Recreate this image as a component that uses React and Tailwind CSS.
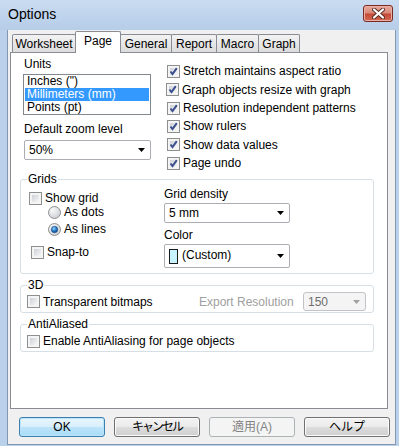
import React from 'react';

const Arrow = ({ disabled }) => (
  <svg width="7" height="4" viewBox="0 0 7 4" className="shrink-0">
    <polygon points="0,0 7,0 3.5,4" fill={disabled ? '#a0a0a0' : '#000'} />
  </svg>
);

const Check = ({ checked }) => (
  <span className="relative block w-[13px] h-[13px] shrink-0 border border-[#8e8f8f] bg-[#f4f4f4] p-[2px]">
    <span className="block w-full h-full bg-linear-to-br from-[#cdd1d7] to-[#f7f7f7]" />
    {checked && (
      <svg className="absolute left-0 top-0" width="11" height="11" viewBox="0 0 11 11">
        <path d="M2.5 5.5 L4.5 8 L8.8 2.2" stroke="#3b4f8c" strokeWidth="2" fill="none" />
      </svg>
    )}
  </span>
);

const Radio = ({ checked }) => (
  <svg width="13" height="13" viewBox="0 0 13 13" className="shrink-0">
    <defs>
      <radialGradient id="rg" cx="0.35" cy="0.3" r="0.8">
        <stop offset="0" stopColor="#f8f8f8" />
        <stop offset="1" stopColor="#c9cdd3" />
      </radialGradient>
      <radialGradient id="rb" cx="0.4" cy="0.35" r="0.7">
        <stop offset="0" stopColor="#9ad8ff" />
        <stop offset="0.5" stopColor="#2a82d2" />
        <stop offset="1" stopColor="#0d3f7a" />
      </radialGradient>
    </defs>
    <circle cx="6.5" cy="6.5" r="6" fill="url(#rg)" stroke="#8e8f8f" />
    {checked && <circle cx="6.5" cy="6.5" r="3.2" fill="url(#rb)" stroke="#1d4a7c" strokeWidth="0.6" />}
  </svg>
);

const CheckRow = ({ label, checked, className = '' }) => (
  <div className={`flex items-center gap-[3px] ${className}`}>
    <Check checked={checked} />
    <span className="leading-[14px]">{label}</span>
  </div>
);

const Combo = ({ value, className = '' }) => (
  <div className={`flex items-center justify-between h-[20px] border border-[#abadb3] rounded-[2px] bg-white pl-[4px] pr-[5px] ${className}`}>
    <span className="leading-[14px]">{value}</span>
    <Arrow />
  </div>
);

const Group = ({ label, className = '', children }) => (
  <fieldset className={`border border-[#d5dfe5] rounded-[3px] ml-[9px] w-[354px] ${className}`}>
    <legend className="ml-[6px] px-[1px] leading-[14px] h-[14px]">{label}</legend>
    {children}
  </fieldset>
);

const Btn = ({ children, kind }) => {
  const base = 'w-[86px] h-[20px] rounded-[3px] flex items-center justify-center border leading-[14px]';
  if (kind === 'ok')
    return (
      <div className={`${base} border-[#3c7fb1] bg-[linear-gradient(#e9f5fc_0%,#d8effc_50%,#bde4fb_50%,#a9dbf6_100%)] shadow-[inset_0_0_0_1px_#b9e4fa]`}>
        {children}
      </div>
    );
  if (kind === 'disabled')
    return <div className={`${base} border-[#adb2b5] bg-[#f4f4f4] text-[#838383]`}>{children}</div>;
  return (
    <div className={`${base} border-[#707070] bg-[linear-gradient(#f2f2f2_0%,#ebebeb_50%,#dddddd_50%,#cfcfcf_100%)] shadow-[inset_0_0_0_1px_#fcfcfc]`}>
      {children}
    </div>
  );
};

const tabs = [
  { name: 'Worksheet', w: 'w-[64px]' },
  { name: 'Page', w: 'w-[46px]', active: true },
  { name: 'General', w: 'w-[52px]' },
  { name: 'Report', w: 'w-[46px]' },
  { name: 'Macro', w: 'w-[43px]' },
  { name: 'Graph', w: 'w-[42px]' },
];

export default function App() {
  return (
    <div className="w-[399px] h-[446px] bg-[#b9d1ea] flex flex-col text-[12px] text-black font-['Liberation_Sans','Noto_Sans_CJK_JP',sans-serif] overflow-hidden">
      {/* title bar */}
      <div className="h-[30px] shrink-0 flex items-start justify-between pl-[8px] pr-[6px] bg-linear-to-b from-[#cadcf0] to-[#b6cde8]">
        <span className="mt-[6px] text-[14px] leading-[16px]">Options</span>
        <div className="mt-[5px] w-[30px] h-[17px] rounded-[3px] border border-[#7a2a22] bg-[linear-gradient(#e8a99c_0%,#d98a7a_45%,#c64a36_55%,#d06a55_100%)] flex items-center justify-center shadow-[inset_0_0_0_1px_#eab0a5]">
          <svg width="13" height="11" viewBox="0 0 13 11">
            <path d="M2 1.5 L11 9.5 M11 1.5 L2 9.5" stroke="#5a2a24" strokeWidth="4" strokeLinecap="round" />
            <path d="M2 1.5 L11 9.5 M11 1.5 L2 9.5" stroke="#fff" strokeWidth="2.2" strokeLinecap="round" />
          </svg>
        </div>
      </div>

      {/* client area */}
      <div className="ml-[7px] w-[389px] h-[415px] bg-[#f0f0f0] border-l border-r border-b border-[#8497b0] flex flex-col">
        {/* tabs */}
        <div className="ml-[5px] mt-[1px] h-[21px] flex items-end relative z-10">
          {tabs.map((t) =>
            t.active ? (
              <div
                key={t.name}
                className={`${t.w} h-[22px] -mb-px -ml-px bg-white border border-b-0 border-[#898c95] rounded-t-[2px] flex justify-center pt-[2px] leading-[14px]`}
              >
                {t.name}
              </div>
            ) : (
              <div
                key={t.name}
                className={`${t.w} h-[18px] -ml-px border border-b-0 border-[#898c95] rounded-t-[2px] bg-linear-to-b from-[#f3f3f3] to-[#dcdcdc] flex items-center justify-center leading-[14px]`}
              >
                {t.name}
              </div>
            )
          )}
        </div>

        {/* panel */}
        <div className="ml-[2px] w-[378px] h-[357px] bg-white border border-[#898c95] flex flex-col">
          <div className="h-[119px] flex">
            <div className="ml-[12px] w-[128px] flex flex-col">
              <span className="mt-[4px] pl-[1px] leading-[14px]">Units</span>
              <div className="mt-[3px] border border-[#828790] px-px">
                <div className="h-[13px] leading-[13px] pl-[2px]">Inches (")</div>
                <div className="h-[13px] leading-[13px] pl-[2px] bg-[#3399ff] text-white">Millimeters (mm)</div>
                <div className="h-[13px] leading-[13px] pl-[2px]">Points (pt)</div>
              </div>
              <span className="mt-[7px] pl-[1px] leading-[14px]">Default zoom level</span>
              <Combo value="50%" className="mt-[4px] ml-[1px] w-[127px]" />
            </div>
            <div className="ml-[16px] mt-[9px] flex flex-col">
              <CheckRow checked label="Stretch maintains aspect ratio" className="h-[19px]" />
              <CheckRow checked label="Graph objects resize with graph" className="h-[18px] -ml-px" />
              <CheckRow checked label="Resolution independent patterns" className="h-[19px]" />
              <CheckRow checked label="Show rulers" className="h-[18px]" />
              <CheckRow checked label="Show data values" className="h-[19px]" />
              <CheckRow checked label="Page undo" className="h-[18px]" />
            </div>
          </div>

          <Group label="Grids" className="pb-[5px]">
            <div className="flex">
              <div className="w-[143px] flex flex-col">
                <CheckRow label="Show grid" className="mt-[5px] ml-[8px] h-[14px]" />
                <div className="ml-[27px] h-[14px] flex items-center gap-[3px]">
                  <Radio />
                  <span className="leading-[14px]">As dots</span>
                </div>
                <div className="mt-[3px] ml-[27px] h-[14px] flex items-center gap-[3px]">
                  <Radio checked />
                  <span className="leading-[14px]">As lines</span>
                </div>
                <CheckRow label="Snap-to" className="mt-[9px] ml-[10px] h-[14px]" />
              </div>
              <div className="w-[126px] flex flex-col">
                <span className="mt-[1px] leading-[14px]">Grid density</span>
                <Combo value="5 mm" className="mt-[2px]" />
                <span className="mt-[5px] leading-[14px]">Color</span>
                <div className="mt-[2px] h-[24px] border border-[#abadb3] rounded-[2px] bg-white flex items-center justify-between pl-[4px] pr-[5px]">
                  <div className="flex items-start gap-[4px] self-start mt-[4px]">
                    <span className="block w-[9px] h-[15px] border border-[#1a1a1a] bg-[#c8f4ff]" />
                    <span className="leading-[12px]">(Custom)</span>
                  </div>
                  <Arrow />
                </div>
              </div>
            </div>
          </Group>

          <Group label="3D" className="mt-[4px] pb-px">
            <div className="flex items-center h-[19px]">
              <CheckRow label="Transparent bitmaps" className="ml-[6px] w-[172px]" />
              <span className="w-[104px] text-[#a0a0a0] leading-[14px]">Export Resolution</span>
              <div className="w-[63px] h-[19px] flex items-center justify-between border border-[#c0c3c7] rounded-[3px] bg-[#f4f4f4] pl-[4px] pr-[5px] text-[#6d6d6d]">
                <span className="leading-[14px]">150</span>
                <Arrow disabled />
              </div>
            </div>
          </Group>

          <Group label="AntiAliased" className="mt-[4px] pb-[3px]">
            <CheckRow label="Enable AntiAliasing for page objects" className="mt-[3px] ml-[6px] h-[14px]" />
          </Group>
        </div>

        {/* buttons */}
        <div className="mt-[8px] ml-[11px] flex gap-[9px]">
          <Btn kind="ok">OK</Btn>
          <Btn><span className="tracking-[-2px]">キャンセル</span></Btn>
          <Btn kind="disabled">適用(A)</Btn>
          <Btn>ヘルプ</Btn>
        </div>
      </div>
    </div>
  );
}
